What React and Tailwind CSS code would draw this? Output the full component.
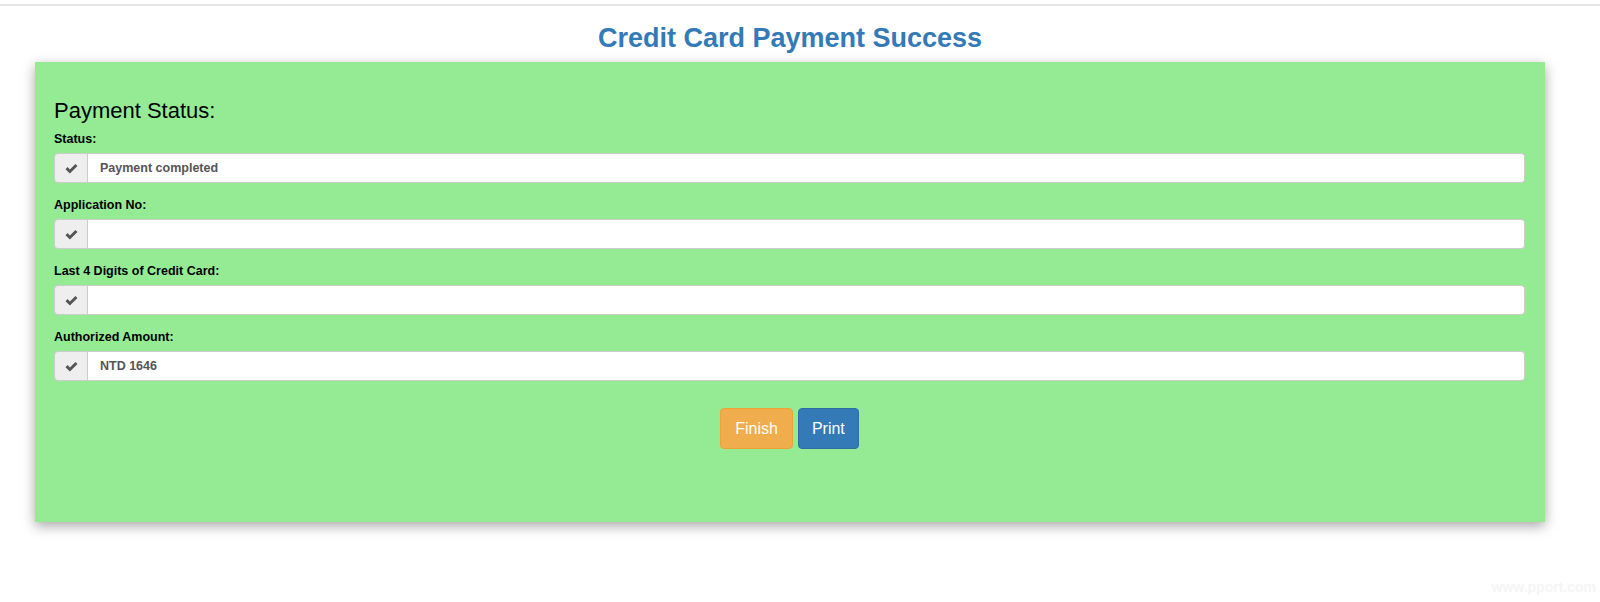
import React from 'react';

const fields = [
  { label: 'Status:', value: 'Payment completed' },
  { label: 'Application No:', value: '' },
  { label: 'Last 4 Digits of Credit Card:', value: '' },
  { label: 'Authorized Amount:', value: 'NTD 1646' },
];

function CheckIcon() {
  return (
    <svg width="13" height="11" viewBox="0 0 13 11" className="text-[#555]">
      <path d="M0.5 6.2 L2.6 4.1 L4.9 6.4 L10.4 0.9 L12.5 3 L4.9 10.6 Z" fill="currentColor" />
    </svg>
  );
}

function Field({ label, value }) {
  return (
    <div className="mb-[13px]">
      <label className="block text-[12.5px] leading-[18px] font-bold text-black mb-[5px]">{label}</label>
      <div className="flex h-[30px]">
        <span className="w-[34px] flex items-center justify-center bg-[#eeeeee] border border-[#cccccc] rounded-l-[4px]">
          <CheckIcon />
        </span>
        <div className="flex-1 flex items-center bg-white border border-l-0 border-[#cccccc] rounded-r-[4px] pl-[12px] text-[12.5px] font-bold text-[#555]">
          {value}
        </div>
      </div>
    </div>
  );
}

export default function App() {
  return (
    <div className="relative w-[1600px] h-[602px] bg-white overflow-hidden" style={{ fontFamily: '"Liberation Sans", Arial, sans-serif' }}>
      <div className="mt-[4px] h-[2px] bg-[#e6e6e6]" />
      <div className="w-[1580px]">
        <h1 className="mt-[17px] mb-[9px] text-center text-[27px] leading-[30px] font-bold text-[#337ab7]">
          Credit Card Payment Success
        </h1>
        <div className="mx-[35px] bg-[#94eb94] pt-[37px] pb-[73px] pl-[19px] pr-[20px] shadow-[0_4px_12px_rgba(0,0,0,0.35)]">
          <h4 className="text-[22px] leading-[24px] text-black mb-[7px]">Payment Status:</h4>
          {fields.map((f) => (
            <Field key={f.label} {...f} />
          ))}
          <div className="flex justify-center gap-[5px] pt-[14px]">
            <button className="px-[14px] py-[10px] text-[16px] leading-[19px] text-white bg-[#f0ad4e] border border-[#eea236] rounded-[4px]">
              Finish
            </button>
            <button className="px-[13px] py-[10px] text-[16px] leading-[19px] text-white bg-[#337ab7] border border-[#2e6da4] rounded-[4px]">
              Print
            </button>
          </div>
        </div>
      </div>
      <div className="absolute right-[4px] bottom-[4px] text-[14px] font-bold text-[#f5f5f5]">www.pport.com</div>
    </div>
  );
}
